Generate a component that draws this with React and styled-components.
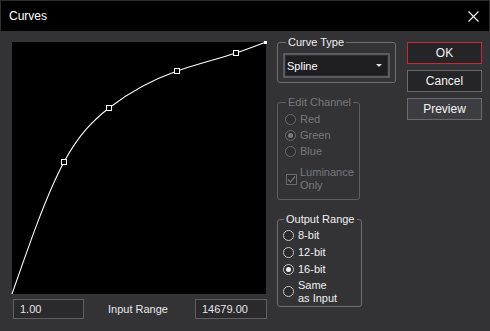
import React from "react";
import styled, { createGlobalStyle } from "styled-components";

const Global = createGlobalStyle`
  html, body { margin: 0; padding: 0; background: #333336; }
  body { font-family: "Liberation Sans", Arial, sans-serif; font-size: 11px; color: #f0f0f0; }
  * { box-sizing: border-box; }
`;

const Window = styled.div`
  width: 490px;
  height: 331px;
  background: #333336;
  display: flex;
  flex-direction: column;
  overflow: hidden;
`;

const TitleBar = styled.div`
  height: 31px;
  background: #000;
  border: 1px solid #2e2e30;
  border-bottom: none;
  display: flex;
  align-items: center;
  justify-content: space-between;
  padding: 0 10px 0 8px;
`;

const Title = styled.span`
  font-size: 12px;
  color: #fff;
`;

const Body = styled.div`
  display: flex;
  align-items: flex-start;
  padding: 11px 0 0 12px;
`;

const LeftCol = styled.div`
  width: 255px;
  display: flex;
  flex-direction: column;
`;

const Canvas = styled.div`
  width: 254px;
  height: 252px;
  background: #000;
  svg { display: block; overflow: visible; }
`;

const RangeRow = styled.div`
  display: flex;
  align-items: center;
  margin-top: 5px;
  padding-left: 1px;
`;

const NumField = styled.div`
  width: ${(p) => p.$w}px;
  height: 20px;
  background: #2a2a2d;
  border: 1px solid #5e5e60;
  color: #e6e6e6;
  line-height: 18px;
  padding-left: 6px;
`;

const RangeLabel = styled.span`
  margin-left: 24px;
  margin-right: auto;
  color: #e8e8e8;
`;

const MidCol = styled.div`
  margin-left: 10px;
  margin-top: -6px;
  display: flex;
  flex-direction: column;
`;

const Group = styled.fieldset`
  width: ${(p) => p.$w}px;
  margin: ${(p) => p.$mt || 0}px 0 0 0;
  border: 1px solid ${(p) => (p.$disabled ? "#5e5e62" : "#6e6e72")};
  border-radius: 3px;
  padding: 0 4px ${(p) => p.$pb || 0}px ${(p) => p.$pl || 5}px;
  color: ${(p) => (p.$disabled ? "#78787c" : "#f0f0f0")};
`;

const Legend = styled.legend`
  padding: 0 2px;
  margin-left: ${(p) => p.$ml || 2}px;
  line-height: 13px;
  white-space: nowrap;
`;

const Select = styled.div`
  margin-top: 4px;
  width: 107px;
  height: 25px;
  border: 2px solid #5c5c60;
  background: #1e1e21;
  display: flex;
  align-items: center;
  justify-content: space-between;
  padding: 0 6px 0 2px;
  color: #fff;
  box-shadow: inset 0 0 0 1px #2c2c2f;
`;

const Arrow = styled.span`
  width: 0;
  height: 0;
  border-left: 3px solid transparent;
  border-right: 3px solid transparent;
  border-top: 3px solid #e0e0e0;
`;

const OptRow = styled.label`
  display: flex;
  align-items: center;
  height: ${(p) => p.$h}px;
  margin-top: ${(p) => p.$mt || 0}px;
  line-height: 13px;
  white-space: nowrap;
`;

const Radio = styled.span`
  width: 11px;
  height: 11px;
  flex: none;
  border-radius: 50%;
  border: 1px solid ${(p) => (p.$disabled ? "#6c6c70" : "#c8c8c8")};
  background: ${(p) => (p.$disabled ? "#2e2e31" : "#2a2a2d")};
  margin-right: 4px;
  display: flex;
  align-items: center;
  justify-content: center;
  &::after {
    content: "";
    display: ${(p) => (p.$on ? "block" : "none")};
    width: 5px;
    height: 5px;
    border-radius: 50%;
    background: ${(p) => (p.$disabled ? "#7a7a7e" : "#f4f4f4")};
  }
`;

const Check = styled.span`
  width: 11px;
  height: 11px;
  flex: none;
  border: 1px solid #6c6c70;
  background: #2e2e31;
  margin: 0 3px 0 1px;
  display: flex;
  align-items: center;
  justify-content: center;
`;

const ButtonCol = styled.div`
  margin-left: 11px;
  display: flex;
  flex-direction: column;
  gap: 6px;
`;

const Button = styled.div`
  width: 75px;
  height: 22px;
  border: 1px solid ${(p) => (p.$primary ? "#c4283f" : "#6a6a6e")};
  background: ${(p) => (p.$light ? "#3d3d41" : "#252528")};
  color: #f4f4f4;
  display: flex;
  align-items: center;
  justify-content: center;
  font-size: 12px;
`;

const CURVE =
  "M0,252 C17.33,202.08 34.67,152.13 52,120 C67,92.19 82,77.7 97,66 " +
  "C119.67,48.32 142.33,37.02 165,29 C184.67,22.04 204.33,17.53 224,11 " +
  "C234,7.68 244,3.84 254,0";

const handles = [
  [52, 120],
  [97, 66],
  [165, 29],
  [224, 11],
];

function CurveChart() {
  return (
    <svg width="254" height="252" viewBox="0 0 254 252">
      <path d={CURVE} fill="none" stroke="#fff" strokeWidth="1.1" />
      {handles.map(([x, y]) => (
        <rect key={x} x={x - 2.5} y={y - 2.5} width="5" height="5" fill="#000" stroke="#fff" strokeWidth="1" shapeRendering="crispEdges" />
      ))}
      <rect x="252" y="-1" width="3" height="3" fill="#fff" />
    </svg>
  );
}

function CloseIcon() {
  return (
    <svg width="11" height="11" viewBox="0 0 11 11">
      <path d="M0.5 0.5 L10.5 10.5 M10.5 0.5 L0.5 10.5" stroke="#fff" strokeWidth="1.1" fill="none" />
    </svg>
  );
}

function CheckMark() {
  return (
    <svg width="9" height="9" viewBox="0 0 9 9">
      <path d="M1 4.5 L3.5 7 L8 1.5" stroke="#6f6f73" strokeWidth="1.2" fill="none" />
    </svg>
  );
}

export default function App() {
  return (
    <>
      <Global />
      <Window>
        <TitleBar>
          <Title>Curves</Title>
          <CloseIcon />
        </TitleBar>
        <Body>
          <LeftCol>
            <Canvas>
              <CurveChart />
            </Canvas>
            <RangeRow>
              <NumField $w={71}>1.00</NumField>
              <RangeLabel>Input Range</RangeLabel>
              <NumField $w={72}>14679.00</NumField>
            </RangeRow>
          </LeftCol>
          <MidCol>
            <Group $w={119} $pb={4}>
              <Legend $ml={3}>Curve Type</Legend>
              <Select>
                <span>Spline</span>
                <Arrow />
              </Select>
            </Group>
            <Group $w={83} $mt={13} $pl={7} $pb={6} $disabled>
              <Legend $ml={1}>Edit Channel</Legend>
              <OptRow $h={16} $mt={2}>
                <Radio $disabled />Red
              </OptRow>
              <OptRow $h={16}>
                <Radio $disabled $on />Green
              </OptRow>
              <OptRow $h={16}>
                <Radio $disabled />Blue
              </OptRow>
              <OptRow $h={28} $mt={6}>
                <Check><CheckMark /></Check>
                <span>Luminance<br />Only</span>
              </OptRow>
            </Group>
            <Group $w={83} $mt={13} $pl={5} $pb={1}>
              <Legend $ml={1}>Output Range</Legend>
              <OptRow $h={17} $mt={1}>
                <Radio />8-bit
              </OptRow>
              <OptRow $h={17}>
                <Radio />12-bit
              </OptRow>
              <OptRow $h={17}>
                <Radio $on />16-bit
              </OptRow>
              <OptRow $h={27}>
                <Radio />
                <span>Same<br />as Input</span>
              </OptRow>
            </Group>
          </MidCol>
          <ButtonCol>
            <Button $primary>OK</Button>
            <Button>Cancel</Button>
            <Button $light>Preview</Button>
          </ButtonCol>
        </Body>
      </Window>
    </>
  );
}
